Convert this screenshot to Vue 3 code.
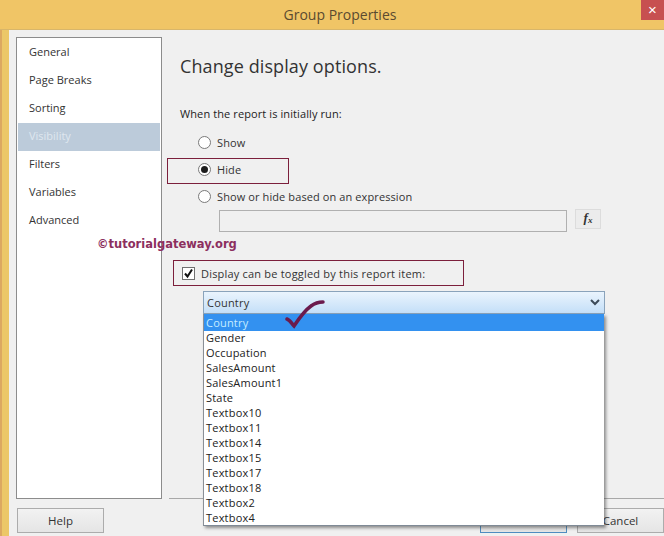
<template>
  <div class="ventana">
    <header class="titulo">
      <span>Group Properties</span>
      <button class="cerrar">×</button>
    </header>

    <div class="cuerpo">
      <div class="centro">
        <nav class="menu">
          <div
            v-for="item in menu"
            :key="item"
            class="menu-item"
            :class="{ activo: item === 'Visibility' }"
          >
            {{ item }}
          </div>
        </nav>

        <main class="contenido">
          <h1>Change display options.</h1>
          <p class="pregunta">When the report is initially run:</p>

          <div class="opcion primera"><span class="radio"></span>Show</div>
          <div class="opcion"><span class="radio marcado"></span>Hide</div>
          <div class="opcion"><span class="radio"></span>Show or hide based on an expression</div>

          <div class="expresion">
            <div class="caja"></div>
            <button class="fx">f<sub>x</sub></button>
          </div>

          <div class="toggle">
            <span class="check">
              <svg width="11" height="11" viewBox="0 0 11 11">
                <path d="M2 5.5 L4.5 8.5 L9 1.5" fill="none" stroke="#111" stroke-width="2" />
              </svg>
            </span>
            Display can be toggled by this report item:
          </div>

          <div class="combo">
            <span>Country</span>
            <svg width="10" height="7" viewBox="0 0 10 7">
              <path d="M1 1 L5 5 L9 1" fill="none" stroke="#3c4a58" stroke-width="2" />
            </svg>
          </div>
        </main>
      </div>

      <footer class="pie">
        <button class="boton">Help</button>
        <div class="derecha">
          <button class="boton ok">OK</button>
          <button class="boton">Cancel</button>
        </div>
      </footer>
    </div>

    <ul class="lista">
      <li v-for="(op, i) in opciones" :key="op" :class="{ elegido: i === 0 }">{{ op }}</li>
    </ul>

    <div class="marca marca-hide"></div>
    <div class="marca marca-toggle"></div>
    <div class="agua">©tutorialgateway.org</div>
    <svg class="tilde" width="44" height="32" viewBox="0 0 44 32">
      <path
        d="M2 19 C5 20 7 24 9 26 C13 20 19 11 26 6 C30 3 33 2 38 2"
        fill="none"
        stroke="#6b1a4c"
        stroke-width="3.5"
        stroke-linecap="round"
      />
    </svg>
  </div>
</template>

<script setup>
const menu = [
  "General",
  "Page Breaks",
  "Sorting",
  "Visibility",
  "Filters",
  "Variables",
  "Advanced",
];

const opciones = [
  "Country",
  "Gender",
  "Occupation",
  "SalesAmount",
  "SalesAmount1",
  "State",
  "Textbox10",
  "Textbox11",
  "Textbox14",
  "Textbox15",
  "Textbox17",
  "Textbox18",
  "Textbox2",
  "Textbox4",
];
</script>

<style>
html,
body {
  margin: 0;
  background: #f0f0f0;
}
</style>

<style scoped>
.ventana {
  position: relative;
  width: 664px;
  height: 536px;
  overflow: hidden;
  display: flex;
  flex-direction: column;
  background: #ecc768;
  font-family: "Open Sans", "Noto Sans", sans-serif;
  font-size: 11px;
  color: #2c2c2c;
}
.ventana::before {
  content: "";
  position: absolute;
  left: 0;
  top: 0;
  bottom: 0;
  width: 2px;
  background: #dca861;
}
.titulo {
  height: 29px;
  flex: none;
  display: flex;
  justify-content: center;
  align-items: center;
  background: #f0c566;
  border-bottom: 1px solid #d8b66a;
  font-size: 14px;
  color: #5a4a30;
  padding-left: 16px;
  position: relative;
}
.cerrar {
  position: absolute;
  top: 0;
  right: 0;
  width: 23px;
  height: 20px;
  padding: 0;
  border: none;
  background: #c75050;
  color: #fff;
  font-size: 15px;
  line-height: 18px;
  font-family: "Liberation Sans", sans-serif;
}
.cuerpo {
  flex: 1;
  margin-left: 9px;
  background: #f0f0f0;
  display: flex;
  flex-direction: column;
  padding: 7px 0 3px 7px;
  min-height: 0;
}
.centro {
  display: flex;
  height: 462px;
  flex: none;
}
.menu {
  width: 144px;
  flex: none;
  background: #fff;
  border: 1px solid #8c8c8c;
  padding-top: 1px;
}
.menu-item {
  height: 28px;
  line-height: 26px;
  padding-left: 11px;
  margin: 0 1px;
  color: #333;
}
.menu-item.activo {
  background: #bccbda;
  color: #dfe7ef;
}
.contenido {
  flex: 1;
  border-bottom: 1px solid #a8a8a8;
  margin-left: 7px;
  padding-left: 11px;
  letter-spacing: 0.1px;
}
.contenido h1 {
  margin: 16px 0 0;
  font-size: 18px;
  font-weight: 400;
  line-height: 26px;
  letter-spacing: 0.1px;
  color: #333;
}
.pregunta {
  margin: 26px 0 0;
  line-height: 18px;
  color: #222;
}
.opcion {
  display: flex;
  align-items: center;
  height: 27px;
  padding-left: 18px;
  color: #333;
}
.opcion.primera {
  margin-top: 6px;
}
.radio {
  width: 11px;
  height: 11px;
  border: 1px solid #7a7a7a;
  border-radius: 50%;
  background: #fff;
  margin-right: 6px;
  position: relative;
}
.radio.marcado::after {
  content: "";
  position: absolute;
  left: 2px;
  top: 2px;
  width: 7px;
  height: 7px;
  border-radius: 50%;
  background: #1c1c1c;
}
.expresion {
  display: flex;
  align-items: flex-start;
  gap: 8px;
  margin-left: 39px;
}
.caja {
  width: 346px;
  height: 20px;
  border: 1px solid #b0b0b0;
  background: #f0f0f0;
}
.fx {
  width: 26px;
  height: 20px;
  margin-top: -1px;
  padding: 0;
  border: 1px solid #dcdcdc;
  background: #ececec;
  font-family: "Liberation Serif", serif;
  font-style: italic;
  font-weight: 700;
  font-size: 13px;
  color: #333;
  line-height: 16px;
}
.fx sub {
  font-size: 9px;
  vertical-align: -1px;
}
.toggle {
  display: flex;
  align-items: center;
  height: 18px;
  margin: 32px 0 0 2px;
  letter-spacing: 0.2px;
  color: #333;
}
.check {
  width: 11px;
  height: 11px;
  border: 1px solid #707070;
  background: #fff;
  margin-right: 6px;
  display: flex;
}
.combo {
  margin: 9px 0 0 23px;
  height: 21px;
  border: 1px solid #8aa3bb;
  background: linear-gradient(#eaf4fd, #c4dff8);
  display: flex;
  align-items: center;
  justify-content: space-between;
  padding: 0 4px 0 3px;
  width: 393px;
  letter-spacing: 0.2px;
  color: #333;
}
.pie {
  flex: 1;
  display: flex;
  justify-content: space-between;
  align-items: flex-end;
  padding-left: 1px;
}
.derecha {
  display: flex;
  gap: 10px;
}
.boton {
  width: 87px;
  height: 25px;
  padding: 0;
  border: 1px solid #acacac;
  background: linear-gradient(#f2f2f2, #e5e5e5);
  font: inherit;
  font-size: 11.5px;
  color: #333;
}
.boton.ok {
  border-color: #4f8cc0;
}
.lista {
  position: absolute;
  left: 203px;
  top: 314px;
  width: 401px;
  height: 212px;
  box-sizing: border-box;
  margin: 0;
  padding: 0;
  list-style: none;
  background: #fff;
  border-left: 1px solid #8a8f96;
  border-bottom: 1px solid #7f8a96;
  box-shadow: 2px 2px 3px rgba(60, 60, 60, 0.55);
  letter-spacing: 0.2px;
}
.lista li {
  height: 15px;
  line-height: 14px;
  padding-left: 2px;
  color: #222;
}
.lista li.elegido {
  height: 17px;
  line-height: 18px;
  background: #3391f0;
  color: #c4ecff;
}
.marca {
  position: absolute;
  border: 1px solid #7c1f3c;
  box-sizing: border-box;
}
.marca-hide {
  left: 167px;
  top: 158px;
  width: 122px;
  height: 26px;
}
.marca-toggle {
  left: 173px;
  top: 260px;
  width: 291px;
  height: 26px;
}
.agua {
  position: absolute;
  left: 97px;
  top: 235px;
  font-family: "DejaVu Sans", sans-serif;
  font-weight: 700;
  font-size: 11.5px;
  line-height: 18px;
  color: #8c2f5e;
  white-space: nowrap;
}
.tilde {
  position: absolute;
  left: 285px;
  top: 300px;
}
</style>
